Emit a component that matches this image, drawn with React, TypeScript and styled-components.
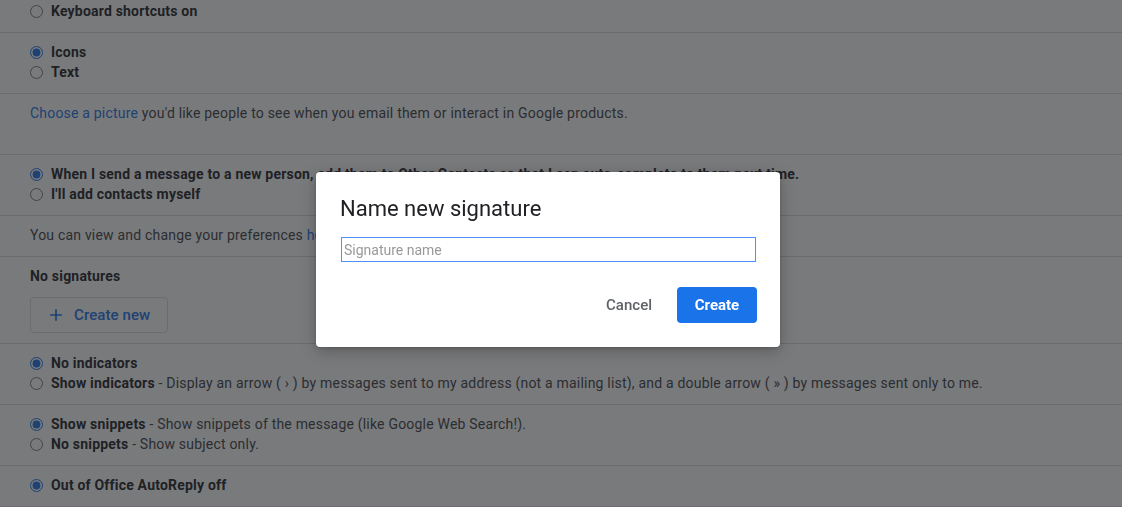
import React from "react";
import styled, { createGlobalStyle } from "styled-components";

const GlobalStyle = createGlobalStyle`
  html, body { margin: 0; padding: 0; background: #ffffff; overflow: hidden; }
  body { font-family: Roboto, "Liberation Sans", Arial, sans-serif; color: #202124; letter-spacing: 0.2px; }
  * { box-sizing: border-box; }
`;

const Page = styled.div`
  margin-top: -8px;
  width: 1122px;
`;

const Section = styled.section<{ $minContent?: number }>`
  padding: 9px 30px 11px;
  border-bottom: 1px solid #dadce0;
  display: flex;
  flex-direction: column;
  min-height: ${(p) => (p.$minContent ? p.$minContent + 21 : 0)}px;
`;

const SignatureSection = styled(Section)`
  padding-bottom: 10px;
  gap: 10px;
  align-items: flex-start;
`;

const Row = styled.label`
  display: flex;
  align-items: center;
  gap: 8px;
  height: 20px;
  font-size: 14px;
  line-height: 20px;
  white-space: nowrap;
`;

const Radio = styled.input.attrs({ type: "radio" })`
  width: 13px;
  height: 13px;
  margin: 1px 0 0;
  flex: none;
  accent-color: #1a73e8;
`;

const Strong = styled.span`
  font-weight: 700;
`;

const Desc = styled.span`
  color: #3c4043;
`;

const Para = styled.div`
  font-size: 14px;
  line-height: 20px;
  color: #3c4043;
  white-space: nowrap;
`;

const Link = styled.a`
  color: #1a73e8;
  text-decoration: none;
`;

const Heading = styled.div`
  font-size: 14px;
  line-height: 20px;
  font-weight: 700;
`;

const OutlineButton = styled.button`
  display: flex;
  align-items: center;
  gap: 8px;
  height: 36px;
  margin-top: 1px;
  padding: 0 17px 0 15px;
  border: 1px solid #dadce0;
  border-radius: 4px;
  background: #fff;
  color: #1a73e8;
  font-family: Roboto, "Liberation Sans", Arial, sans-serif;
  font-size: 15px;
  font-weight: 500;
  letter-spacing: 0.1px;
  cursor: pointer;
  svg { display: block; }
`;

const Overlay = styled.div`
  position: fixed;
  inset: 0;
  background: rgba(32, 33, 36, 0.6);
  display: flex;
  align-items: flex-start;
  padding: 172px 0 0 316px;
`;

const Dialog = styled.div`
  width: 464px;
  height: 175px;
  background: #fff;
  border-radius: 4px;
  box-shadow: 0 4px 16px rgba(0, 0, 0, 0.25), 0 1px 3px rgba(0, 0, 0, 0.15);
  padding: 23px 24px 24px;
  display: flex;
  flex-direction: column;
`;

const Title = styled.h2`
  margin: 0;
  font-size: 22px;
  line-height: 28px;
  font-weight: 400;
  letter-spacing: 0;
  color: #202124;
`;

const NameInput = styled.input`
  margin-top: 14px;
  margin-left: 1px;
  width: 415px;
  height: 25px;
  border: 1px solid #4d90fe;
  outline: none;
  padding: 0 2px;
  font-family: Roboto, "Liberation Sans", Arial, sans-serif;
  font-size: 14px;
  letter-spacing: 0;
  color: #202124;
  &::placeholder { color: #999999; }
`;

const Actions = styled.div`
  margin-top: 25px;
  display: flex;
  justify-content: flex-end;
  gap: 9px;
`;

const TextButton = styled.button`
  height: 36px;
  padding: 0 16px;
  border: none;
  background: transparent;
  color: #5f6368;
  font-family: Roboto, "Liberation Sans", Arial, sans-serif;
  font-size: 15px;
  font-weight: 500;
  cursor: pointer;
`;

const PrimaryButton = styled.button`
  height: 36px;
  min-width: 80px;
  margin-right: -1px;
  padding: 0 17px;
  border: none;
  border-radius: 4px;
  background: #1a73e8;
  color: #fff;
  font-family: Roboto, "Liberation Sans", Arial, sans-serif;
  font-size: 15px;
  font-weight: 700;
  cursor: pointer;
`;

const PlusIcon = () => (
  <svg width="20" height="20" viewBox="0 0 24 24" fill="#1a73e8">
    <path d="M19 13h-6v6h-2v-6H5v-2h6V5h2v6h6v2z" />
  </svg>
);

export default function App() {
  return (
    <>
      <GlobalStyle />
      <Page>
        <Section>
          <Row>
            <Radio name="kbd" />
            <Strong>Keyboard shortcuts on</Strong>
          </Row>
        </Section>
        <Section>
          <Row>
            <Radio name="labels" defaultChecked />
            <Strong>Icons</Strong>
          </Row>
          <Row>
            <Radio name="labels" />
            <Strong>Text</Strong>
          </Row>
        </Section>
        <Section $minContent={40}>
          <Para>
            <Link href="#">Choose a picture</Link> you'd like people to see when you email them or interact in Google products.
          </Para>
        </Section>
        <Section>
          <Row>
            <Radio name="contacts" defaultChecked />
            <Strong>
              When I send a message to a new person, add them to Other Contacts so that I can auto-complete to them next time.
            </Strong>
          </Row>
          <Row>
            <Radio name="contacts" />
            <Strong>I'll add contacts myself</Strong>
          </Row>
        </Section>
        <Section>
          <Para>
            You can view and change your preferences <Link href="#">here</Link>.
          </Para>
        </Section>
        <SignatureSection>
          <Heading>No signatures</Heading>
          <OutlineButton>
            <PlusIcon />
            Create new
          </OutlineButton>
        </SignatureSection>
        <Section>
          <Row>
            <Radio name="ind" defaultChecked />
            <Strong>No indicators</Strong>
          </Row>
          <Row>
            <Radio name="ind" />
            <span>
              <Strong>Show indicators</Strong>
              <Desc> - Display an arrow ( › ) by messages sent to my address (not a mailing list), and a double arrow ( » ) by messages sent only to me.</Desc>
            </span>
          </Row>
        </Section>
        <Section>
          <Row>
            <Radio name="snip" defaultChecked />
            <span>
              <Strong>Show snippets</Strong>
              <Desc> - Show snippets of the message (like Google Web Search!).</Desc>
            </span>
          </Row>
          <Row>
            <Radio name="snip" />
            <span>
              <Strong>No snippets</Strong>
              <Desc> - Show subject only.</Desc>
            </span>
          </Row>
        </Section>
        <Section>
          <Row>
            <Radio name="ooo" defaultChecked />
            <Strong>Out of Office AutoReply off</Strong>
          </Row>
        </Section>
      </Page>
      <Overlay>
        <Dialog>
          <Title>Name new signature</Title>
          <NameInput placeholder="Signature name" />
          <Actions>
            <TextButton>Cancel</TextButton>
            <PrimaryButton>Create</PrimaryButton>
          </Actions>
        </Dialog>
      </Overlay>
    </>
  );
}
